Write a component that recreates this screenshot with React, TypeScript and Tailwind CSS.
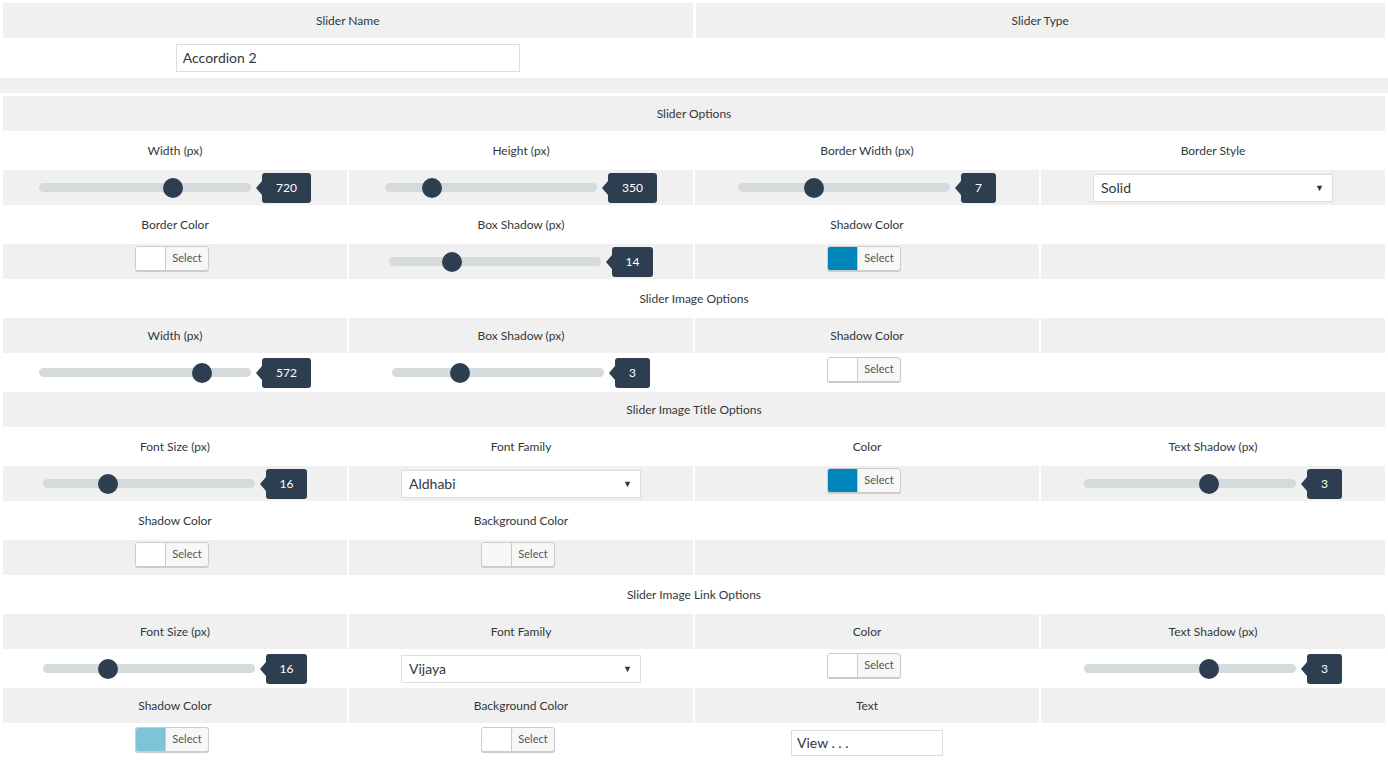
import React from 'react';
import clsx from 'clsx';

type CellProps = {
  gray: boolean;
  span?: 2 | 4;
  children?: React.ReactNode;
};

function Cell({ gray, span, children }: CellProps) {
  return (
    <div
      className={clsx(
        'flex items-center justify-center text-[12px] text-[#32373c]',
        gray ? 'bg-[#f0f0f0]' : 'bg-white',
        span === 4 && 'col-span-4',
        span === 2 && 'col-span-2'
      )}
    >
      {children}
    </div>
  );
}

function Slider({ value, pct }: { value: string; pct: number }) {
  return (
    <div className="flex items-center">
      <div className="relative h-[9px] w-[212px] rounded-full bg-[#d5dadd]">
        <div
          className="absolute top-1/2 h-5 w-5 -translate-y-1/2 rounded-full bg-[#2c3e50]"
          style={{ left: `calc(${pct}% - 10px)` }}
        />
      </div>
      <div className="relative ml-[11px] flex h-[30px] items-center rounded-[3px] bg-[#2c3e50] px-[14px] text-[12px] text-white">
        <span className="absolute left-[-6px] top-1/2 -translate-y-1/2 border-y-[7px] border-r-[6px] border-y-transparent border-r-[#2c3e50]" />
        {value}
      </div>
    </div>
  );
}

function ColorButton({ swatch }: { swatch: string }) {
  return (
    <div className="mr-[6px] mb-[6px] flex h-[25px] w-[74px] overflow-hidden rounded-[3px] border border-[#ccc] bg-[#f7f7f7] shadow-[0_1px_0_#ccc]">
      <span className={clsx('h-full w-[30px] border-r border-[#ccc]', swatch)} />
      <span className="flex flex-1 items-center justify-center text-[11px] text-[#555]">Select</span>
    </div>
  );
}

function Dropdown({ value }: { value: string }) {
  return (
    <div className="flex h-[28px] w-[240px] items-center justify-between border border-[#ddd] bg-white pl-[7px] pr-[8px] text-[14px] text-[#32373c]">
      <span>{value}</span>
      <span className="text-[9px] text-[#333]">▼</span>
    </div>
  );
}

export default function App() {
  return (
    <div className="min-h-[763px] bg-white font-['Lato','Liberation_Sans',sans-serif]">
      {/* Name / type */}
      <div className="grid grid-cols-2 auto-rows-[35px] gap-[3px] px-[3px] pt-[3px] pb-[2px]">
        <Cell gray>Slider Name</Cell>
        <Cell gray>Slider Type</Cell>
        <Cell gray={false}>
          <input
            readOnly
            value="Accordion 2"
            className="mb-[2px] h-[28px] w-[344px] border border-[#ddd] bg-white px-[6px] text-[14px] text-[#32373c] outline-none"
          />
        </Cell>
        <Cell gray={false} />
      </div>

      <div className="h-[15px] bg-[#f0f0f0]" />

      {/* Options */}
      <div className="grid grid-cols-4 auto-rows-[35px] gap-[2px] px-[3px] pt-[3px]">
        <Cell gray span={4}>Slider Options</Cell>

        <Cell gray={false}>Width (px)</Cell>
        <Cell gray={false}>Height (px)</Cell>
        <Cell gray={false}>Border Width (px)</Cell>
        <Cell gray={false}>Border Style</Cell>

        <Cell gray><Slider value="720" pct={63} /></Cell>
        <Cell gray><Slider value="350" pct={22} /></Cell>
        <Cell gray><Slider value="7" pct={36} /></Cell>
        <Cell gray><Dropdown value="Solid" /></Cell>

        <Cell gray={false}>Border Color</Cell>
        <Cell gray={false}>Box Shadow (px)</Cell>
        <Cell gray={false}>Shadow Color</Cell>
        <Cell gray={false} />

        <Cell gray><ColorButton swatch="bg-white" /></Cell>
        <Cell gray><Slider value="14" pct={30} /></Cell>
        <Cell gray><ColorButton swatch="bg-[#0085ba]" /></Cell>
        <Cell gray />

        <Cell gray={false} span={4}>Slider Image Options</Cell>

        <Cell gray>Width (px)</Cell>
        <Cell gray>Box Shadow (px)</Cell>
        <Cell gray>Shadow Color</Cell>
        <Cell gray />

        <Cell gray={false}><Slider value="572" pct={77} /></Cell>
        <Cell gray={false}><Slider value="3" pct={32} /></Cell>
        <Cell gray={false}><ColorButton swatch="bg-white" /></Cell>
        <Cell gray={false} />

        <Cell gray span={4}>Slider Image Title Options</Cell>

        <Cell gray={false}>Font Size (px)</Cell>
        <Cell gray={false}>Font Family</Cell>
        <Cell gray={false}>Color</Cell>
        <Cell gray={false}>Text Shadow (px)</Cell>

        <Cell gray><Slider value="16" pct={31} /></Cell>
        <Cell gray><Dropdown value="Aldhabi" /></Cell>
        <Cell gray><ColorButton swatch="bg-[#0085ba]" /></Cell>
        <Cell gray><Slider value="3" pct={59} /></Cell>

        <Cell gray={false}>Shadow Color</Cell>
        <Cell gray={false}>Background Color</Cell>
        <Cell gray={false} span={2} />

        <Cell gray><ColorButton swatch="bg-white" /></Cell>
        <Cell gray><ColorButton swatch="bg-[#f7f7f7]" /></Cell>
        <Cell gray span={2} />

        <Cell gray={false} span={4}>Slider Image Link Options</Cell>

        <Cell gray>Font Size (px)</Cell>
        <Cell gray>Font Family</Cell>
        <Cell gray>Color</Cell>
        <Cell gray>Text Shadow (px)</Cell>

        <Cell gray={false}><Slider value="16" pct={31} /></Cell>
        <Cell gray={false}><Dropdown value="Vijaya" /></Cell>
        <Cell gray={false}><ColorButton swatch="bg-white" /></Cell>
        <Cell gray={false}><Slider value="3" pct={59} /></Cell>

        <Cell gray>Shadow Color</Cell>
        <Cell gray>Background Color</Cell>
        <Cell gray>Text</Cell>
        <Cell gray />

        <Cell gray={false}><ColorButton swatch="bg-[#7fc3d8]" /></Cell>
        <Cell gray={false}><ColorButton swatch="bg-white" /></Cell>
        <Cell gray={false}>
          <input
            readOnly
            value="View . . ."
            className="h-[26px] w-[152px] border border-[#ddd] bg-white px-[5px] text-[14px] text-[#32373c] outline-none"
          />
        </Cell>
        <Cell gray={false} />
      </div>
    </div>
  );
}
